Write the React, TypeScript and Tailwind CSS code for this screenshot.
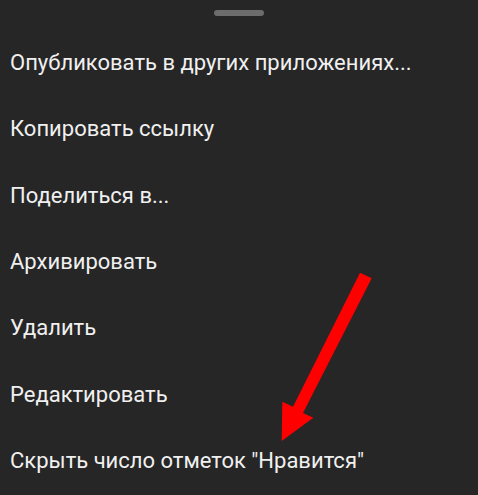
const items = [
  "Опубликовать в других приложениях...",
  "Копировать ссылку",
  "Поделиться в...",
  "Архивировать",
  "Удалить",
  "Редактировать",
  'Скрыть число отметок "Нравится"',
];

export default function App() {
  return (
    <div className="relative h-[495px] w-[478px] overflow-hidden bg-[#262626] font-['Roboto',sans-serif]">
      <div className="flex justify-center pt-[10px]">
        <div className="h-[6px] w-[50px] rounded-full bg-[#6c6c6c]" />
      </div>
      <ul className="mt-[14px] flex flex-col">
        {items.map((label) => (
          <li
            key={label}
            className="flex h-[66.33px] items-center px-[10px] text-[22px] leading-[28px] text-[#f0f0f0]"
          >
            {label}
          </li>
        ))}
      </ul>
      <svg
        className="pointer-events-none absolute left-0 top-0"
        width="478"
        height="495"
        viewBox="0 0 478 495"
      >
        <polygon
          points="360,272.7 371.7,278.3 303,413 313.3,417.7 281.7,441 282.3,401.7 293,406.7"
          fill="#ff0000"
        />
      </svg>
    </div>
  );
}
